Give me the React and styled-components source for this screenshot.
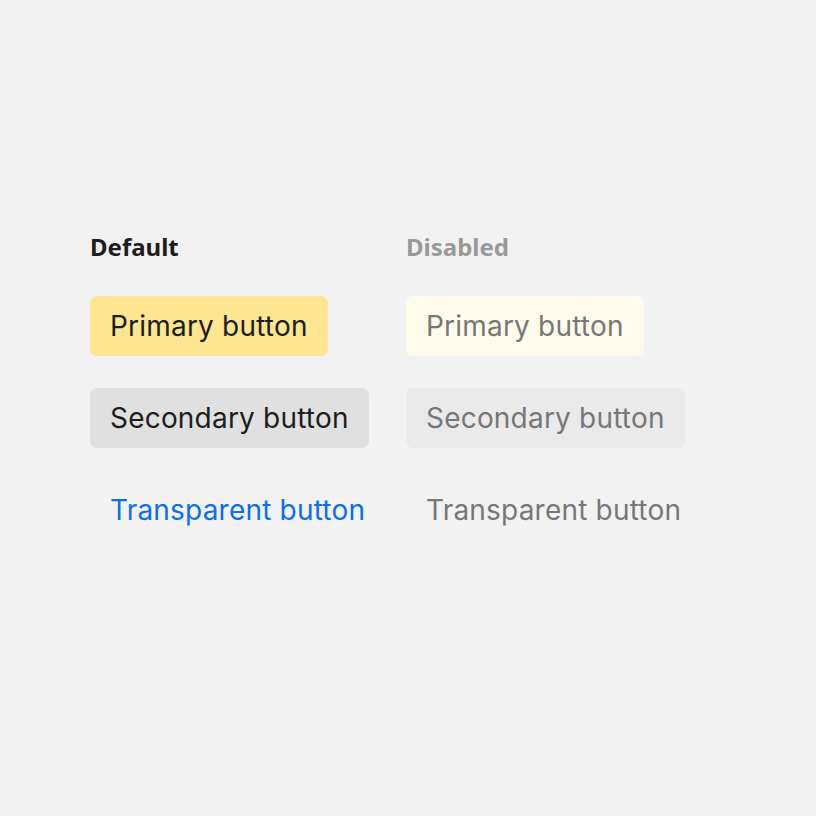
import React from "react";
import styled, { createGlobalStyle, css } from "styled-components";

const Global = createGlobalStyle`
  html, body { margin: 0; padding: 0; background: #f2f2f2; }
  body { font-family: Inter, "Noto Sans", sans-serif; }
`;

const Page = styled.div`
  width: 816px;
  height: 816px;
  box-sizing: border-box;
  padding: 230px 0 0 90px;
  display: grid;
  grid-template-columns: 316px 316px;
  align-content: start;
`;

const Column = styled.div`
  display: flex;
  flex-direction: column;
  align-items: flex-start;
  gap: 32px;
`;

const Heading = styled.h2`
  margin: 0;
  font-family: "Noto Sans", sans-serif;
  font-weight: 700;
  font-size: 24px;
  line-height: 34px;
  color: ${(p) => (p.$disabled ? "#999999" : "#1d1d1d")};
`;

const variants = {
  primary: css`
    background: ${(p) => (p.disabled ? "#fffbec" : "#fde591")};
    color: ${(p) => (p.disabled ? "#777777" : "#1d1d1d")};
  `,
  secondary: css`
    background: ${(p) => (p.disabled ? "#eaeaea" : "#e0e0e0")};
    color: ${(p) => (p.disabled ? "#777777" : "#1d1d1d")};
  `,
  transparent: css`
    background: transparent;
    color: ${(p) => (p.disabled ? "#777777" : "#0a6fe8")};
  `,
};

const Button = styled.button`
  height: 60px;
  padding: 0 20px;
  border: none;
  border-radius: 7px;
  font-family: Inter, sans-serif;
  font-size: 28px;
  font-weight: 400;
  letter-spacing: 0.2px;
  cursor: ${(p) => (p.disabled ? "default" : "pointer")};
  ${(p) => variants[p.$variant]}
`;

function Group({ title, disabled }) {
  return (
    <Column>
      <Heading $disabled={disabled}>{title}</Heading>
      <Button $variant="primary" disabled={disabled}>Primary button</Button>
      <Button $variant="secondary" disabled={disabled}>Secondary button</Button>
      <Button $variant="transparent" disabled={disabled}>Transparent button</Button>
    </Column>
  );
}

export default function App() {
  return (
    <>
      <Global />
      <Page>
        <Group title="Default" />
        <Group title="Disabled" disabled />
      </Page>
    </>
  );
}
